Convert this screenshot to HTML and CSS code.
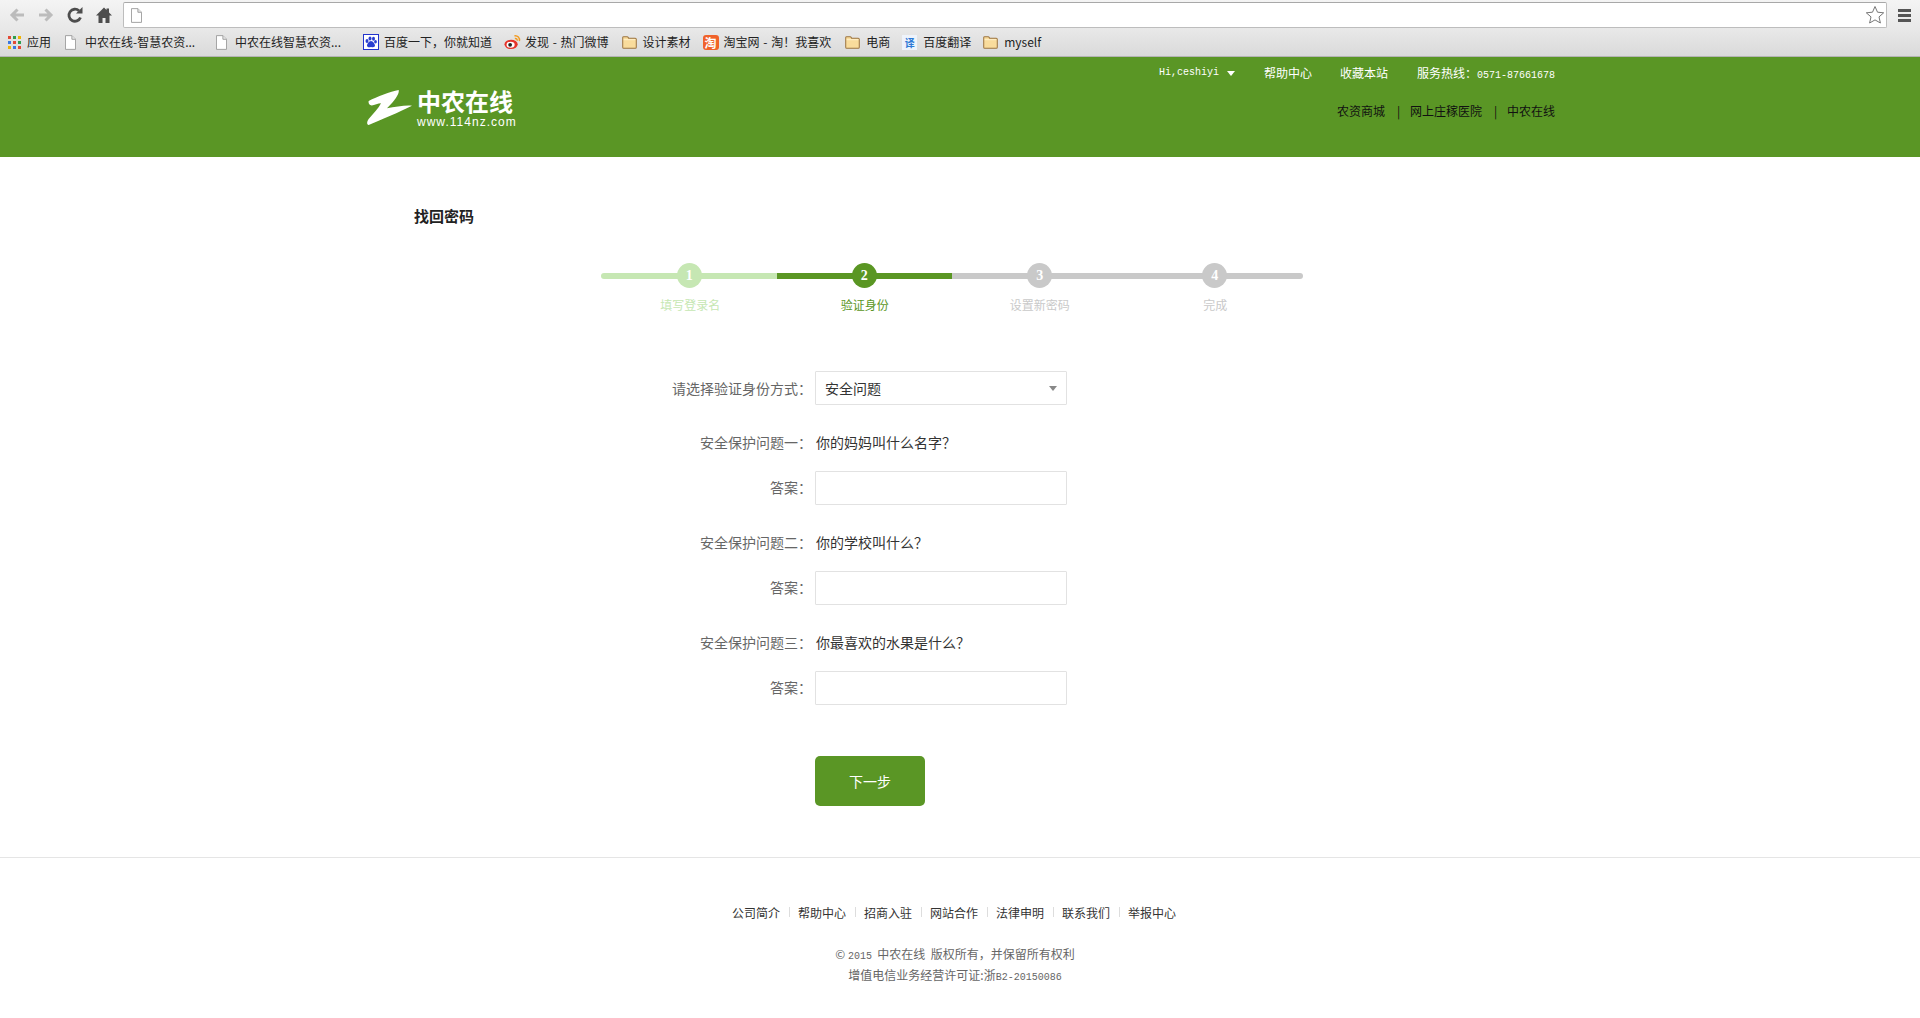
FILE: index.html
```html
<!DOCTYPE html>
<html lang="zh-CN">
<head>
<meta charset="utf-8">
<title>找回密码</title>
<link rel="stylesheet" href="styles.css">
</head>
<body>
<svg class="defs" width="0" height="0" aria-hidden="true">
  <symbol id="doc" viewBox="0 0 12 16"><path d="M.5.5h7l4 4v11H.5z" fill="#fff" stroke="#9a9a9a"/><path d="M7.5.5v4h4" fill="#e8e8e8" stroke="#9a9a9a"/></symbol>
  <symbol id="folder" viewBox="0 0 16 14"><path d="M.7 3V1.8C.7 1.100 1.200.7 1.800.7h3.600c.6 0 1 .4 1.300 1l.3.6h7.200c.7 0 1.100.5 1.100 1.100v8.700c0 .7-.5 1.200-1.100 1.200H1.800c-.6 0-1.100-.5-1.100-1.200z" fill="#f9dc9c" stroke="#9c7440" stroke-width="1.100"/><path d="M1.700 4h12.600" stroke="#fff2cf"/></symbol>
</svg>

<div class="toolbar">
  <div class="nav-icons">
    <svg class="ic" viewBox="0 0 18 18"><path d="M16 9H5M9.500 3.500 4 9l5.500 5.500" fill="none" stroke="#bcbcbc" stroke-width="3"/></svg>
    <svg class="ic" viewBox="0 0 18 18"><path d="M2 9h11M8.500 3.500 14 9l-5.500 5.500" fill="none" stroke="#bcbcbc" stroke-width="3"/></svg>
    <svg class="ic" viewBox="0 0 18 18"><path d="M14.500 11.500A6 6 0 1 1 13 4.800" fill="none" stroke="#4d4d4d" stroke-width="2.800"/><path d="M10 7.500h6.500V1z" fill="#4d4d4d"/></svg>
    <svg class="ic" viewBox="0 0 18 18"><path d="M9 1.500 1 9.500h2.500V17h4v-5h3v5h4V9.500H17l-3-3V2.500h-2.500v1.500z" fill="#4d4d4d"/></svg>
  </div>
  <div class="urlbar">
    <svg class="url-doc"><use href="#doc"/></svg>
    <svg class="star" viewBox="0 0 20 20"><path d="m10 1.500 2.500 5.700 6.200.6-4.700 4.100 1.400 6.100L10 14.900l-5.400 3.100L6 11.900 1.300 7.800l6.200-.6z" fill="#fff" stroke="#777"/></svg>
  </div>
  <div class="menu"><i></i><i></i><i></i></div>
</div>

<div class="bookmarks">
  <a class="bm">
    <span class="apps"><i class="r"></i><i class="g"></i><i class="y"></i><i class="b"></i><i class="r"></i><i class="g"></i><i class="y"></i><i class="b"></i><i class="r"></i></span>
    <span>应用</span>
  </a>
  <a class="bm bm-doc"><svg class="bi-doc"><use href="#doc"/></svg><span class="bt-long">中农在线-智慧农资...</span></a>
  <a class="bm bm-doc2"><svg class="bi-doc"><use href="#doc"/></svg><span class="bt-long2">中农在线智慧农资...</span></a>
  <a class="bm"><svg class="bi" viewBox="0 0 16 16"><rect x=".5" y=".5" width="15" height="15" fill="#fff" stroke="#2233cc"/><g fill="#2a3fd0"><ellipse cx="4" cy="7" rx="1.500" ry="2"/><ellipse cx="7" cy="4.500" rx="1.500" ry="2"/><ellipse cx="10.500" cy="4.800" rx="1.500" ry="2"/><ellipse cx="12.500" cy="7.800" rx="1.400" ry="1.800"/><path d="M8 7c2 0 4 3 4 4.500 0 2-2 1.800-4 1.500-2 .4-4 .4-4-1.500C4 10 6 7 8 7z"/></g></svg><span>百度一下，你就知道</span></a>
  <a class="bm"><svg class="bi-w" viewBox="0 0 18 16"><ellipse cx="7.500" cy="10.500" rx="7" ry="5" fill="#e6342a"/><ellipse cx="7" cy="11" rx="4.300" ry="3.200" fill="#fff"/><circle cx="6.500" cy="11" r="2" fill="#222"/><path d="M11 1.500c3.500-.5 6 2.200 5.300 5.500M11.500 4.300c1.700-.3 2.700 1 2.400 2.400" fill="none" stroke="#f39a1e" stroke-width="1.500"/></svg><span class="bt-weibo">发现 - 热门微博</span></a>
  <a class="bm"><svg class="bi-f"><use href="#folder"/></svg><span>设计素材</span></a>
  <a class="bm"><span class="tao">淘</span><span class="bt-tao">淘宝网 - 淘！我喜欢</span></a>
  <a class="bm"><svg class="bi-f"><use href="#folder"/></svg><span>电商</span></a>
  <a class="bm"><span class="yi">译</span><span>百度翻译</span></a>
  <a class="bm"><svg class="bi-f"><use href="#folder"/></svg><span>myself</span></a>
</div>

<header class="site-header">
  <div class="wrap header-inner">
    <a class="logo">
      <svg class="logo-mark" viewBox="80 105 135 105"><path d="M85 138C110 125 150 110 175 105c3 10-10 30-35 55 25-5 55-10 75-8-35 18-95 43-130 58-7-2-5-10 0-18 15-17 30-32 37-47-10 0-27 10-32 5-5-3-6-8-5-12z" fill="#fff"/></svg>
      <span class="logo-text"><b>中农在线</b><small>www.114nz.com</small></span>
    </a>
    <div class="header-links">
      <div class="top-links">
        <a class="user"><span class="mono">Hi,ceshiyi</span><i class="caret"></i></a>
        <a>帮助中心</a>
        <a>收藏本站</a>
        <a class="hotline">服务热线：<span class="mono">0571-87661678</span></a>
      </div>
      <div class="sub-links">
        <a>农资商城</a><i>|</i><a>网上庄稼医院</a><i>|</i><a>中农在线</a>
      </div>
    </div>
  </div>
</header>

<main class="wrap main">
  <h1 class="title">找回密码</h1>

  <ol class="steps">
    <li class="step done"><span class="dot">1</span><span class="step-label">填写登录名</span></li>
    <li class="step active"><span class="dot">2</span><span class="step-label">验证身份</span></li>
    <li class="step"><span class="dot">3</span><span class="step-label">设置新密码</span></li>
    <li class="step"><span class="dot">4</span><span class="step-label">完成</span></li>
  </ol>

  <form class="form">
    <div class="row">
      <label class="lbl">请选择验证身份方式：</label>
      <div class="select-box">
        <select class="field select"><option>安全问题</option></select>
        <i class="select-caret"></i>
      </div>
    </div>
    <div class="group">
      <div class="row q"><span class="lbl">安全保护问题一：</span><span class="question">你的妈妈叫什么名字？</span></div>
      <div class="row"><label class="lbl">答案：</label><input class="field" type="text"></div>
    </div>
    <div class="group">
      <div class="row q"><span class="lbl">安全保护问题二：</span><span class="question">你的学校叫什么？</span></div>
      <div class="row"><label class="lbl">答案：</label><input class="field" type="text"></div>
    </div>
    <div class="group">
      <div class="row q"><span class="lbl">安全保护问题三：</span><span class="question">你最喜欢的水果是什么？</span></div>
      <div class="row"><label class="lbl">答案：</label><input class="field" type="text"></div>
    </div>
    <div class="row submit-row"><span></span><button class="next" type="button">下一步</button></div>
  </form>
</main>

<footer class="footer">
  <nav class="foot-links">
    <a>公司简介</a><i></i><a>帮助中心</a><i></i><a>招商入驻</a><i></i><a>网站合作</a><i></i><a>法律申明</a><i></i><a>联系我们</a><i></i><a>举报中心</a>
  </nav>
  <p class="copy">© <span class="mono">2015</span>&nbsp; 中农在线&nbsp; 版权所有，并保留所有权利</p>
  <p class="copy">增值电信业务经营许可证:浙<span class="mono">B2-20150086</span></p>
</footer>
</body>
</html>
```

FILE: styles.css
```css
* { box-sizing: border-box; }
html, body { margin: 0; padding: 0; height: 1018px; overflow: hidden; background: #fff; }
body { font-family: "Noto Sans CJK SC", "Liberation Sans", sans-serif; font-size: 12px; color: #333; }
a { color: inherit; text-decoration: none; }
i { font-style: normal; }
.defs { display: block; height: 0; }
.mono { font-family: "Liberation Mono", monospace; font-size: 10px; line-height: 1; }

/* browser chrome */
.toolbar { height: 29px; display: flex; align-items: flex-start; padding-top: 2px; background: linear-gradient(#f4f4f4, #e8e8e8); }
.nav-icons { display: flex; gap: 11px; width: 123px; padding: 4px 0 0 8px; }
.ic { width: 18px; height: 18px; flex: none; }
.urlbar { width: 1764px; height: 26px; display: flex; justify-content: space-between; align-items: center; padding: 0 1px 0 7px; background: #fff; border: 1px solid #bdbdbd; border-top-color: #a8a8a8; border-radius: 2px; }
.url-doc { width: 11px; height: 15px; }
.star { width: 20px; height: 20px; }
.menu { display: flex; flex-direction: column; gap: 2px; padding: 7px 0 0 11px; }
.menu i { display: block; width: 13px; height: 3px; background: #555; }

.bookmarks { height: 28px; display: flex; align-items: center; gap: 12px; padding: 0 0 1px 8px; background: linear-gradient(#e8e8e8, #dadada); border-bottom: 1px solid #b4b4b4; color: #222; line-height: 16px; }
.bm { display: flex; align-items: center; gap: 5px; white-space: nowrap; }
.bm-doc { margin-left: 2px; gap: 9px; }
.bm-doc2 { margin-left: 9px; gap: 8px; margin-right: 11px; }
.bt-long { width: 110px; }
.bt-long2 { width: 105px; }
.bt-weibo { word-spacing: 1px; margin-right: 1px; }
.bt-tao { word-spacing: 1px; margin-right: 2px; }
.apps { display: grid; grid-template-columns: repeat(3, 3px); gap: 2px; margin-right: 1px; }
.apps i { width: 3px; height: 3px; display: block; }
.apps .r { background: #e34a35; }
.apps .g { background: #2f9e4f; }
.apps .y { background: #f0b400; }
.apps .b { background: #3a78e0; }
.bi-doc { width: 11px; height: 15px; }
.bi { width: 16px; height: 16px; }
.bi-w { width: 17px; height: 16px; margin-right: -1px; }
.bi-f { width: 15px; height: 13px; margin-right: 1px; }
.tao { width: 16px; height: 15px; background: #f0622a; border-radius: 3px; color: #fff; font-size: 12px; font-weight: 700; line-height: 15px; text-align: center; overflow: hidden; }
.yi { width: 15px; height: 15px; margin-right: 1px; background: #eef3fb; color: #2d7ad6; font-size: 10px; font-weight: 700; line-height: 15px; text-align: center; }

/* site header */
.wrap { width: 1190px; margin: 0 auto; }
.site-header { height: 100px; background: #5a9625; }
.header-inner { height: 100%; display: flex; justify-content: space-between; }
.logo { display: flex; gap: 5px; padding: 33px 0 0 2px; color: #fff; }
.logo-mark { width: 45px; height: 35px; }
.logo-text { display: flex; flex-direction: column; width: 100px; margin-top: -1px; }
.logo-text b { display: block; height: 24px; font-size: 24px; line-height: 24px; font-weight: 700; }
.logo-text small { display: block; font-family: "Liberation Sans", sans-serif; font-size: 12px; line-height: 12px; letter-spacing: 1.020px; margin-top: 3px; }
.header-links { display: flex; flex-direction: column; align-items: flex-end; padding-top: 6px; }
.top-links { display: flex; gap: 28px; height: 18px; align-items: center; color: #fff; }
.user { display: flex; align-items: center; gap: 8px; margin-right: 1px; padding-top: 2px; }
.hotline { margin-left: 1px; }
.caret { width: 0; height: 0; border: 4px solid transparent; border-top: 5px solid #fff; border-bottom: 0; }
.sub-links { display: flex; gap: 12px; margin-top: 20px; height: 18px; align-items: center; color: #111; }
.sub-links i { width: 1px; overflow: visible; }

/* main */
.main { padding-top: 49px; }
.title { margin: 0 0 0 49px; font-size: 15px; line-height: 20px; font-weight: 700; color: #222; }
.steps { list-style: none; display: flex; width: 702px; margin: 37px 0 0 236px; padding: 0; }
.step { flex: 1; display: flex; flex-direction: column; align-items: center; position: relative; color: #c9c9c9; }
.step::before { content: ""; position: absolute; left: 0; right: 0; top: 10px; height: 6px; background: currentColor; }
.step:first-child::before { border-radius: 3px 0 0 3px; }
.step:last-child::before { border-radius: 0 3px 3px 0; }
.step.done { color: #c6e7b3; }
.step.active { color: #5a9623; }
.dot { position: relative; width: 25px; height: 25px; border-radius: 50%; background: currentColor; text-align: center; line-height: 25px; font-family: "Liberation Serif", serif; font-weight: 700; font-size: 14px; -webkit-text-fill-color: #fff; }
.step:first-child .dot { margin-left: 1px; }
.step:last-child .dot { margin-right: 1px; }
.step-label { margin-top: 8px; line-height: 18px; font-size: 12px; }
.step.done .step-label { margin-left: 3px; }
.step.active .step-label { margin-left: 1px; }

.form { display: flex; flex-direction: column; gap: 26px; margin-top: 57px; }
.group { display: flex; flex-direction: column; gap: 16px; }
.row { display: grid; grid-template-columns: 447px 252px; column-gap: 3px; align-items: center; }
.row.q { height: 24px; }
.lbl { text-align: right; font-size: 14px; color: #666; white-space: nowrap; }
.question { font-size: 14px; color: #333; padding-left: 1px; }
.group .lbl, .question { padding-bottom: 2px; }
.field { display: block; width: 252px; height: 34px; border: 1px solid #e2e2e2; background: #fff; border-radius: 1px; padding: 0 9px; font: inherit; font-size: 14px; color: #333; outline: 0; }
.select-box { position: relative; width: 252px; }
.select { appearance: none; -webkit-appearance: none; }
.select-caret { position: absolute; right: 10px; top: 15px; width: 0; height: 0; border: 4px solid transparent; border-top: 5px solid #888; border-bottom: 0; }
.submit-row { margin-top: 25px; }
.next { width: 110px; height: 50px; border: 0; border-radius: 5px; background: #5a9625; color: #fff; font: inherit; font-size: 14px; }

/* footer */
.footer { margin-top: 51px; border-top: 1px solid #e5e5e5; text-align: center; }
.foot-links { display: flex; justify-content: center; align-items: center; margin: 45px 0 0 -12px; height: 18px; color: #333; }
.foot-links i { width: 1px; height: 10px; margin: 0 8px 0 9px; background: #ddd; }
.copy { margin: 0; height: 21px; padding-right: 10px; font-size: 12px; line-height: 21px; color: #666; }
.foot-links + .copy { margin-top: 22px; }
```
